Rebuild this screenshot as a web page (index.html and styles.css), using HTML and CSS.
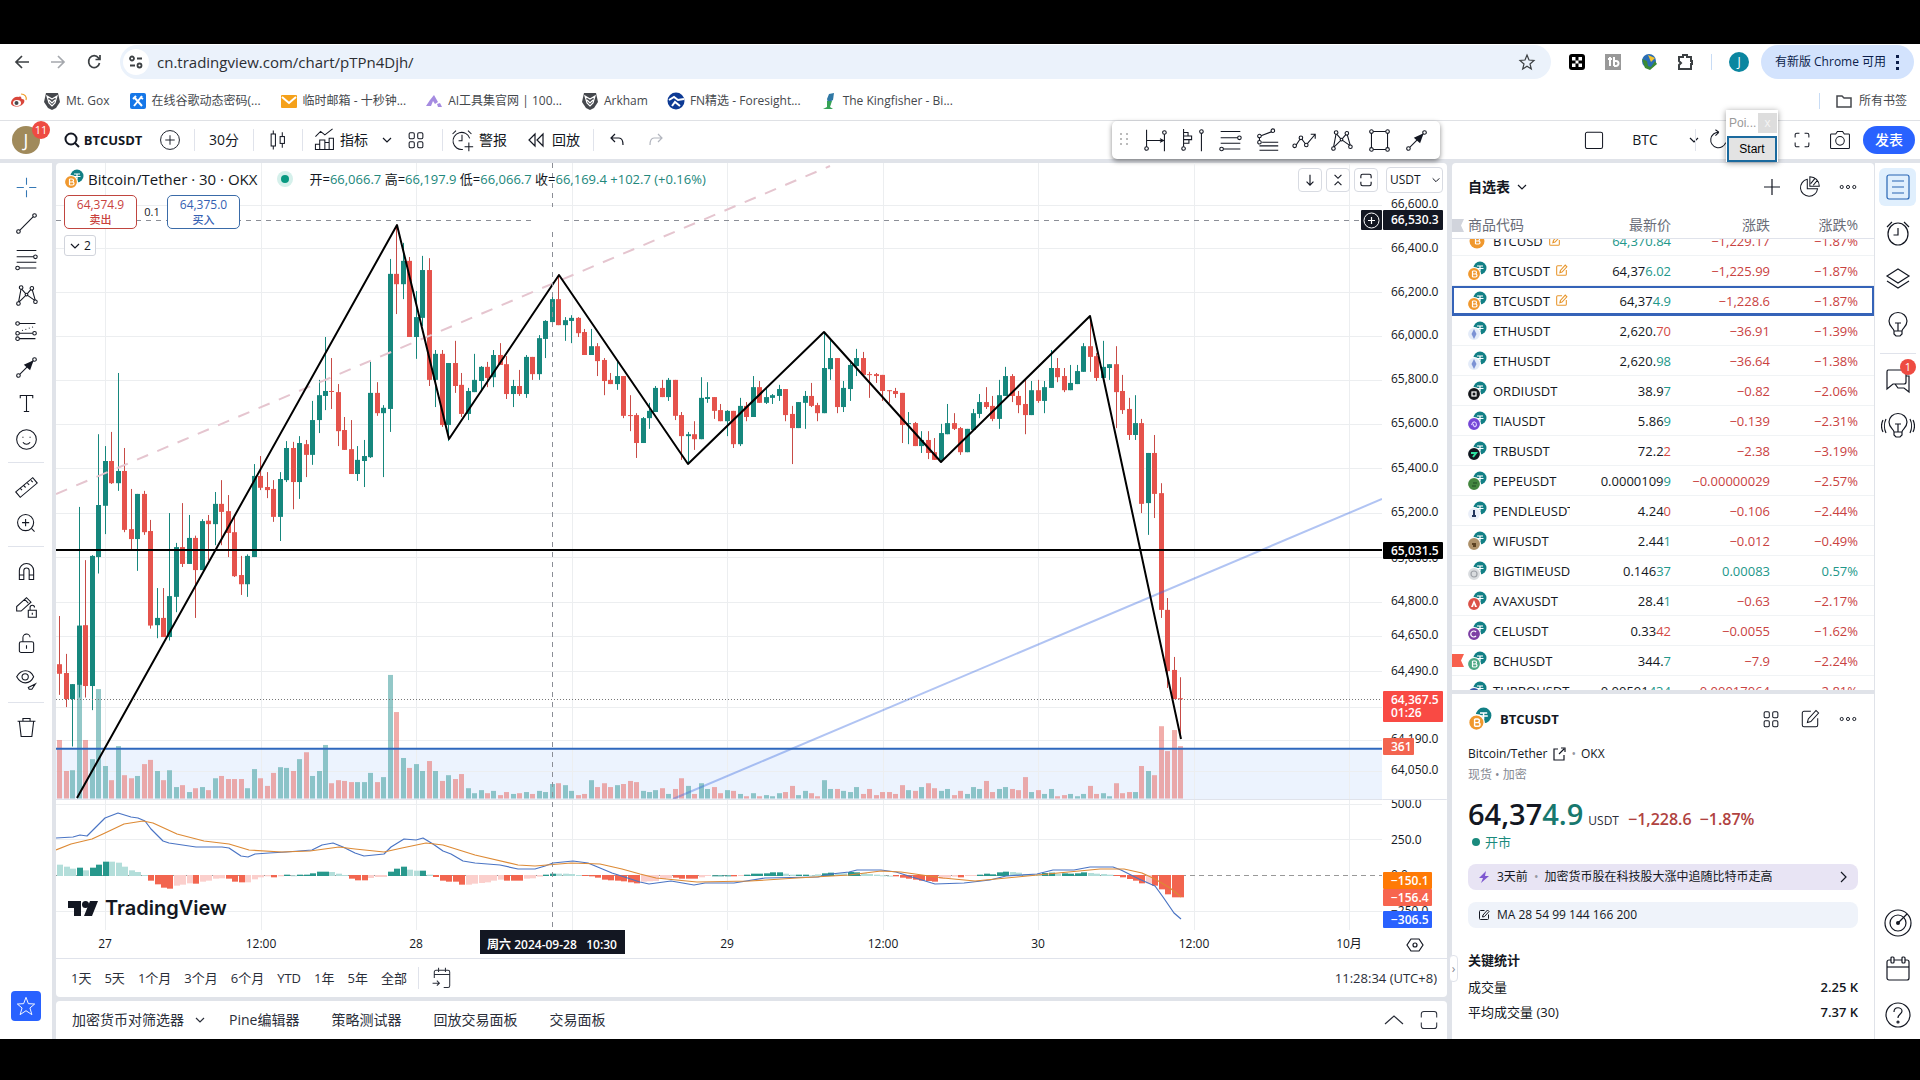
FILE: index.html
```html
<!DOCTYPE html>
<html lang="zh-CN">
<head>
<meta charset="utf-8">
<title>BTCUSDT — TradingView</title>
<link rel="stylesheet" href="styles.css">
</head>
<body>
<svg class="sprite" aria-hidden="true">
  <defs>
    <symbol id="chev" viewBox="0 0 12 12"><path d="M2 4l4 4 4-4"/></symbol>
    <symbol id="grid" viewBox="0 0 28 28"><rect x="6" y="5.500" width="6" height="7" rx="1.500"/><rect x="16" y="5.500" width="6" height="7" rx="1.500"/><rect x="6" y="16" width="6" height="7" rx="1.500"/><rect x="16" y="16" width="6" height="7" rx="1.500"/></symbol>
    <symbol id="alarm" viewBox="0 0 28 28"><ellipse cx="14" cy="15" rx="10" ry="11"/><path d="M14 9v7H9.500M3 8l5-5M25 8l-5-5"/></symbol>
    <symbol id="bulb" viewBox="0 0 28 28"><path d="M10 20c0-3-5-4-5-10a9 8.500 0 0 1 18 0c0 6-5 7-5 10zM10 20v3l2 2h4l2-2v-3M14 12v8M11 12h6"/></symbol>
    <symbol id="expand" viewBox="0 0 28 28"><path d="M6 11V8a2 2 0 0 1 2-2h3M17 6h3a2 2 0 0 1 2 2v3M22 17v3a2 2 0 0 1-2 2h-3M11 22H8a2 2 0 0 1-2-2v-3"/></symbol>
    <symbol id="frame" viewBox="0 0 28 28"><path d="M5 11V7a3 3 0 0 1 3-3h12a3 3 0 0 1 3 3v4M23 17v4a3 3 0 0 1-3 3H8a3 3 0 0 1-3-3v-4"/></symbol>
    <symbol id="dots" viewBox="0 0 28 28"><circle cx="6" cy="14" r="2"/><circle cx="14" cy="14" r="2"/><circle cx="22" cy="14" r="2"/></symbol>
    <symbol id="edit" viewBox="0 0 28 28"><path d="M15 5H7a2 2 0 0 0-2 2v14a2 2 0 0 0 2 2h14a2 2 0 0 0 2-2v-8M11 18l1-4L21 4l3 3-9 10z"/></symbol>
    <symbol id="fibo" viewBox="0 0 28 28"><path d="M3 4h22M3 11h19M3 17h22M6 23.500h19"/><circle cx="24" cy="11" r="2"/><circle cx="4" cy="23.500" r="2"/></symbol>
    <symbol id="pattern" viewBox="0 0 28 28"><path d="M5 22L8 6l6 7 6-7 4 14M5 22l9-9 10 7"/><g class="node"><circle cx="5" cy="23" r="2"/><circle cx="8" cy="5" r="2"/><circle cx="14" cy="13" r="1.500"/><circle cx="20" cy="6" r="2"/><circle cx="24" cy="21" r="2"/></g></symbol>
    <symbol id="arrow" viewBox="0 0 28 28"><path d="M5 23L22 6"/><path class="solid" d="M22 6l-4 11-7-6z"/><g class="node"><circle cx="5" cy="23" r="2"/><circle cx="23" cy="5" r="2"/></g></symbol>
    <symbol id="arkham" viewBox="0 0 18 18"><path class="solid" d="M3 1h12l2 9-4 6-4 2-4-2-4-6z"/><path stroke="#fff" d="M4 4l5 3 5-3-2 7-3 3-3-3zM6 8l3 3 3-3"/></symbol>
    <symbol id="coins" viewBox="0 0 20 20"><circle cx="13" cy="7" r="6.500" fill="#117f85" stroke="none"/><path d="M10 5h6M13 5v5M9.500 7.500h7" stroke="#fff"/><circle class="coin" cx="7" cy="13" r="6.500" stroke="#fff"/></symbol>
    <symbol id="btc" viewBox="0 0 20 20"><path stroke="#fff" d="M5.500 10v6M5.500 10h2.500a1.500 1.500 0 0 1 0 3H5.500h3a1.500 1.500 0 0 1 0 3h-3"/></symbol>
  </defs>
</svg>

<div class="browser">
  <header class="chrome">
    <div class="address-row">
      <button class="nav" aria-label="后退"><svg viewBox="0 0 20 20"><path d="M17 10H4M10 4l-6 6 6 6"/></svg></button>
      <button class="nav faded" aria-label="前进"><svg viewBox="0 0 20 20"><path d="M3 10h13M10 4l6 6-6 6"/></svg></button>
      <button class="nav" aria-label="重新加载"><svg viewBox="0 0 20 20"><path d="M15.500 11a5.500 6 0 1 1-1-5l1 1M16 3v4.500h-4.500"/></svg></button>
      <div class="omnibox">
        <span class="site"><svg viewBox="0 0 16 16"><circle cx="4" cy="4.500" r="2"/><path d="M9 4.500h5M2 11.500h5"/><circle cx="11.500" cy="11.500" r="2"/></svg></span>
        <input class="url" aria-label="地址" value="cn.tradingview.com/chart/pTPn4Djh/">
        <svg class="i18" viewBox="0 0 18 18"><path d="M9 2l2 5 5 .5-4 3.500 1.300 5L9 13.300 4.700 16 6 11 2 7.500 7 7z"/></svg>
      </div>
      <div class="extensions">
        <svg class="i18" viewBox="0 0 18 18"><rect x="1" y="1" width="16" height="16" rx="3" fill="#000" stroke="none"/><path fill="#fff" stroke="none" d="M4 4h3.500v3.500H4zM10.500 4H14v3.500h-3.500zM4 10.500h3.500V14H4zM10.500 10.500H14V14h-3.500zM7.500 7.500h3v3h-3z"/></svg>
        <svg class="i18" viewBox="0 0 18 18"><rect x="1" y="1" width="16" height="16" fill="#999" stroke="none"/><path stroke="#fff" stroke-width="2" d="M4 6h4M6 4v9M10 4v9M10 8h2a2 2 0 0 1 0 5h-2"/></svg>
        <svg class="i18" viewBox="0 0 18 18"><circle cx="9" cy="8" r="7" fill="#2a6db5" stroke="none"/><path fill="#f4c430" stroke="none" d="M8 2l7 3-4 4z"/><path fill="#3a8a35" stroke="none" d="M2 6l5 2 1 5 3 1 4-6 2 3-7 6-5-2z"/></svg>
        <svg class="i18" viewBox="0 0 18 18"><path stroke-width="2" d="M3 4h4V2h4v2h4v4h1v3h-1v5H3v-4l2-2-2-2z"/></svg>
        <i class="vline blue"></i>
        <span class="profile">J</span>
        <button class="update">有新版 Chrome 可用 <svg viewBox="0 0 4 18"><path class="solid" d="M0 2h3v3H0zM0 8h3v3H0zM0 14h3v3H0z"/></svg></button>
      </div>
    </div>
    <nav class="bookmarks" aria-label="书签">
      <a href="#" aria-label="微博"><svg class="i18" viewBox="0 0 18 18"><path fill="#d9463b" stroke="none" d="M8 5c4-2 3 2 4 2 3 0 3 3 1 5-4 4-12 3-12-1 0-3 4-7 7-6z"/><ellipse cx="7" cy="11" rx="4" ry="3" fill="#fff" stroke="none"/><circle class="solid" cx="6.500" cy="11" r="2"/><path stroke="#f0a030" d="M11 2c4 0 6 3 5 6"/></svg></a>
      <a href="#"><svg class="i18"><use href="#arkham"/></svg>Mt. Gox</a>
      <a href="#"><svg class="i18" viewBox="0 0 18 18"><rect x="1" y="1" width="16" height="16" rx="2" fill="#1677e8" stroke="none"/><path stroke="#fff" stroke-width="2" d="M5 5l8 9M13 4l-8 10M4 7l3-3M11 5l3 2"/></svg>在线谷歌动态密码(...</a>
      <a href="#"><svg class="i18" viewBox="0 0 18 18"><rect x="1" y="3" width="16" height="13" rx="1" fill="#f5a11a" stroke="none"/><path stroke="#fff" stroke-width="2" d="M2 5l7 6 7-6"/></svg>临时邮箱 - 十秒钟...</a>
      <a href="#"><svg class="i18" viewBox="0 0 18 18"><path fill="#a58be0" stroke="none" d="M9 3l4 7-3 2-2-3-2 5H1l4-6zM12 12l3-1 2 4h-4z"/></svg>AI工具集官网 | 100...</a>
      <a href="#"><svg class="i18"><use href="#arkham"/></svg>Arkham</a>
      <a href="#"><svg class="i18" viewBox="0 0 18 18"><circle cx="9" cy="9" r="8.500" fill="#0d3a94" stroke="none"/><path stroke="#fff" stroke-width="2" d="M2 8l5-3 4 3 6-1M5 14l3-4 5 4"/></svg>FN精选 - Foresight...</a>
      <a href="#"><svg class="i18" viewBox="0 0 18 18"><path fill="#2f78a5" stroke="none" d="M9 2l5-1-1 7-5 3-1-4z"/><path fill="#36a256" stroke="none" d="M7 9l5 0-2 6 3 2H3l4-2z"/></svg>The Kingfisher - Bi...</a>
      <span class="spacer"></span>
      <i class="vline blue"></i>
      <a href="#"><svg class="i18" viewBox="0 0 18 18"><path stroke-width="1.500" d="M2 4h5l2 2h7v9H2z"/></svg>所有书签</a>
    </nav>
  </header>

  <div class="topbar">
    <div class="account">J<b>11</b></div>
    <button class="symbol"><svg class="i16" viewBox="0 0 16 16"><circle cx="7" cy="7" r="5.500" stroke-width="2"/><path stroke-width="2" d="M11 11l4 4"/></svg>BTCUSDT</button>
    <button aria-label="对比"><svg class="i22" viewBox="0 0 28 28"><circle cx="14" cy="14" r="12"/><path d="M14 8v12M8 14h12"/></svg></button>
    <i class="vline"></i>
    <button class="interval">30分</button>
    <i class="vline"></i>
    <button class="bars" aria-label="K线"><svg class="i24" viewBox="0 0 28 28"><rect x="6" y="7" width="5" height="14"/><path d="M8.500 3v4M8.500 21v4M19 5v5M19 18v5"/><rect x="16.500" y="10" width="5" height="8"/></svg></button>
    <i class="vline"></i>
    <button class="indicators"><svg class="i24" viewBox="0 0 28 28"><path d="M4 10l6-6 5 4 9-7M4 25v-6h5v6zM9 25V14h6v11M15 25v-8h5v8M20 17v-5h5v13H4"/></svg>指标</button>
    <button aria-label="指标菜单"><svg class="i10"><use href="#chev"/></svg></button>
    <button class="layouts" aria-label="模板"><svg class="i24"><use href="#grid"/></svg></button>
    <i class="vline"></i>
    <button class="alert"><svg class="i24" viewBox="0 0 28 28"><path d="M23 12a10 10 0 1 0-8 13M14 8v7h-4M3 7l4-4M25 7l-4-4M22 17v10M17 22h10"/></svg>警报</button>
    <button class="replay"><svg class="i18" viewBox="0 0 18 18"><path d="M8 3v12L2 9zM16 3v12l-6-6z"/></svg>回放</button>
    <i class="vline"></i>
    <button class="undo" aria-label="撤销"><svg class="i18" viewBox="0 0 18 18"><path d="M7 3L3 7l4 4M3 7h8c3 0 4 3 4 7"/></svg></button>
    <button class="undo faded" aria-label="重做"><svg class="i18" viewBox="0 0 18 18"><path d="M11 3l4 4-4 4M15 7H7c-3 0-4 3-4 7"/></svg></button>
    <span class="spacer"></span>
    <div class="favorites">
      <svg class="grip" viewBox="0 0 8 14"><path fill="#bbb" stroke="none" d="M0 0h2v2H0zM6 0h2v2H6zM0 5h2v2H0zM6 5h2v2H6zM0 10h2v2H0zM6 10h2v2H6z"/></svg>
      <button aria-label="日期范围"><svg viewBox="0 0 28 28"><path d="M4 2v20M24 6v20M4 14h18M19 12l4 2-4 2"/><g class="node"><circle cx="4" cy="23" r="2"/><circle cx="24" cy="5" r="2"/></g></svg></button>
      <button aria-label="成交量分布"><svg viewBox="0 0 28 28"><path d="M4 1v20M4 5h5v4H4M4 9h9v4H4M4 13h6v4H4M24 6v20"/><g class="node"><circle cx="4" cy="23" r="2"/><circle cx="24" cy="4" r="2"/></g></svg></button>
      <button aria-label="斐波那契回撤"><svg><use href="#fibo"/></svg></button>
      <button aria-label="趋势斐波那契"><svg viewBox="0 0 28 28"><path d="M6 9l13-5M5 10v6M8 16h18M5 20h21M5 25h21"/><g class="node"><circle cx="5" cy="9" r="2"/><circle cx="5" cy="16" r="2"/><circle cx="20" cy="3" r="2"/></g></svg></button>
      <button aria-label="路径"><svg viewBox="0 0 28 28"><path d="M4 20l6-9 6 8 10-12M21 7h5v5"/><g class="node"><circle cx="3" cy="20" r="2"/><circle cx="10" cy="11" r="2"/><circle cx="16" cy="19" r="2"/></g></svg></button>
      <button aria-label="XABCD"><svg><use href="#pattern"/></svg></button>
      <button aria-label="矩形"><svg viewBox="0 0 28 28"><path d="M5 4h18v20H5z"/><g class="node"><circle cx="5" cy="4" r="2"/><circle cx="23" cy="4" r="2"/><circle cx="5" cy="24" r="2"/><circle cx="23" cy="24" r="2"/></g></svg></button>
      <button aria-label="箭头"><svg><use href="#arrow"/></svg></button>
    </div>
    <button class="layout-box" aria-label="布局"><svg class="i24" viewBox="0 0 28 28"><rect x="4" y="5" width="20" height="19" rx="2"/></svg></button>
    <button class="layout-name">BTC <svg class="i10"><use href="#chev"/></svg></button>
    <i class="vline"></i>
    <button class="quick" aria-label="快速搜索"><svg class="i24" viewBox="0 0 28 28"><path d="M15 5a9 9 0 1 0 8 12M15 5l-4-3M15 5l-4 4"/></svg></button>
    <button class="tool-r" aria-label="全屏"><svg class="i24"><use href="#expand"/></svg></button>
    <button class="tool-r" aria-label="快照"><svg class="i24" viewBox="0 0 28 28"><path d="M4 7h5l2-3h6l2 3h5a1 1 0 0 1 1 1v15a1 1 0 0 1-1 1H4a1 1 0 0 1-1-1V8a1 1 0 0 1 1-1z"/><circle cx="14" cy="15" r="5"/></svg></button>
    <button class="publish">发表</button>
    <div class="mini-window">
      <div class="mini-title">Poi...<button aria-label="关闭">x</button></div>
      <button class="start">Start</button>
    </div>
  </div>

  <div class="workspace">
    <aside class="drawing" aria-label="绘图工具">
      <button aria-label="十字"><svg viewBox="0 0 28 28" class="cross"><path d="M14 3v8M14 17v8M3 14h8M17 14h8"/></svg></button>
      <button aria-label="趋势线"><svg viewBox="0 0 28 28"><path d="M5 23L23 5"/><g class="node"><circle cx="5" cy="23" r="2"/><circle cx="23" cy="5" r="2"/></g></svg></button>
      <button aria-label="斐波那契"><svg><use href="#fibo"/></svg></button>
      <button aria-label="形态"><svg><use href="#pattern"/></svg></button>
      <button aria-label="预测"><svg viewBox="0 0 28 28"><path d="M5 5h19M5 16h17M5 22h19"/><path stroke-dasharray="1 3" d="M9 13l15-5"/><g class="node"><circle cx="4" cy="5" r="2"/><circle cx="4" cy="16" r="2"/><circle cx="4" cy="22" r="2"/><circle cx="23" cy="16" r="2"/></g></svg></button>
      <button aria-label="箭头"><svg><use href="#arrow"/></svg></button>
      <button aria-label="文字"><svg viewBox="0 0 28 28"><path d="M7 8V5h14v3M14 5v18M11 23h6"/></svg></button>
      <button aria-label="图标"><svg viewBox="0 0 28 28"><circle cx="14" cy="14" r="11"/><path d="M10 11v1M18 11v1M10 17c2 3 6 3 8 0"/></svg></button>
      <hr>
      <button aria-label="测量"><svg viewBox="0 0 28 28"><path d="M2 19L21 3l5 6L7 25zM7 15l2 2M11 12l2 2M15 9l2 2M19 6l2 2"/></svg></button>
      <button aria-label="放大"><svg viewBox="0 0 28 28"><circle cx="13" cy="13" r="9"/><path d="M19.500 19.500L23 23M13 9v8M9 13h8"/></svg></button>
      <hr>
      <button aria-label="磁铁"><svg viewBox="0 0 28 28"><path d="M6 23V13a8 8 0 0 1 16 0v10h-5V13a3 3 0 0 0-6 0v10zM6 18h5M17 18h5"/></svg></button>
      <button aria-label="保持绘图"><svg viewBox="0 0 28 28"><path d="M3 18v-5L14 3l5 5L8 18zM12 5l4 4M16 17h9v8h-9zM18 17v-3a2.500 2.500 0 0 1 5 0M20.500 20v2"/></svg></button>
      <button aria-label="锁定"><svg viewBox="0 0 28 28"><rect x="6" y="12" width="16" height="12" rx="2"/><path d="M10 12V8a4 4 0 0 1 8-1M14 16v4"/></svg></button>
      <button aria-label="隐藏"><svg viewBox="0 0 28 28"><path d="M3 11c5-9 15-9 19 0-4 9-14 9-19 0zM16 23l8-4-4 6-3 0z"/><circle cx="12.500" cy="11" r="3.500"/></svg></button>
      <hr>
      <button aria-label="删除"><svg viewBox="0 0 28 28"><path d="M4 7h20M6 7l2 17h12l2-17M10 7V4h8v3"/></svg></button>
      <span class="spacer"></span>
      <button class="fav" aria-label="收藏工具栏"><svg viewBox="0 0 28 28"><path d="M14 3l3 8 8 .5-6 5 2.500 8.500L14 20l-7.500 5L9 16.500l-6-5 8-.5z"/></svg></button>
    </aside>

    <main class="center">
      <section class="chart">
        <div class="panes">
          <svg id="plot" class="plot" role="img" aria-label="BTCUSDT 30分 K线图"></svg>
          <svg id="axis" class="axis" aria-label="价格坐标"></svg>
          <div class="legend">
            <div class="legend-title">
              <svg class="i20 btc"><use href="#coins"/><use href="#btc"/></svg>
              <h1>Bitcoin/Tether · 30 · OKX</h1><i class="live"></i>
              <p>开=<b>66,066.7</b> 高=<b>66,197.9</b> 低=<b>66,066.7</b> 收=<b>66,169.4</b> <b>+102.7 (+0.16%)</b></p>
            </div>
            <div class="trade">
              <button class="sell">64,374.9<span>卖出</span></button><small>0.1</small><button class="buy">64,375.0<span>买入</span></button>
            </div>
            <button class="collapse"><svg class="i10"><use href="#chev"/></svg>2</button>
          </div>
          <a class="brand" href="#"><svg viewBox="0 0 30 15"><path class="solid" d="M0 0h13v15H6V7H0zM22 0h8l-6 15h-8z"/><circle class="solid" cx="17.500" cy="3.500" r="3.500"/></svg>TradingView</a>
          <div class="pane-tools">
            <button aria-label="下移"><svg viewBox="0 0 28 28"><path d="M14 5v18M8 17l6 6 6-6"/></svg></button>
            <button aria-label="折叠"><svg viewBox="0 0 28 28"><path d="M8 5l6 6 6-6M8 23l6-6 6 6"/></svg></button>
            <button aria-label="最大化"><svg><use href="#frame"/></svg></button>
            <label class="currency"><select aria-label="货币"><option>USDT</option></select><svg class="i10"><use href="#chev"/></svg></label>
          </div>
        </div>
        <svg id="time" class="time" aria-label="时间坐标"></svg>
        <div class="ranges">
          <button>1天</button><button>5天</button><button>1个月</button><button>3个月</button><button>6个月</button><button>YTD</button><button>1年</button><button>5年</button><button>全部</button>
          <i class="vline"></i>
          <button class="goto" aria-label="前往日期"><svg class="i24" viewBox="0 0 28 28"><path d="M5 14V7a2 2 0 0 1 2-2h14a2 2 0 0 1 2 2v16a2 2 0 0 1-2 2h-5M5 10h18M10 2v5M18 2v5M3 20h8M8 17l3 3-3 3"/></svg></button>
          <span class="spacer"></span>
          <button>11:28:34 (UTC+8)</button>
        </div>
      </section>
      <section class="tabs">
        <button>加密货币对筛选器 <svg class="i10"><use href="#chev"/></svg></button><button>Pine编辑器</button><button>策略测试器</button><button>回放交易面板</button><button>交易面板</button>
        <span class="spacer"></span>
        <button aria-label="展开"><svg class="i20" viewBox="0 0 20 20"><path d="M1 14l9-8 9 8"/></svg></button>
        <button aria-label="最大化"><svg class="i24"><use href="#frame"/></svg></button>
      </section>
    </main>

    <section class="side">
      <button class="handle" aria-label="收起">›</button>
      <div class="watch">
        <header><h2>自选表 <svg class="i10"><use href="#chev"/></svg></h2>
          <button aria-label="添加"><svg class="i18" viewBox="0 0 18 18"><path d="M9 1v16M1 9h16"/></svg></button>
          <button aria-label="高级视图"><svg class="i24" viewBox="0 0 28 28"><path d="M12 5a10 10 0 1 0 12 11H12zM15 2v11h11A11 11 0 0 0 15 2zM16 10l5-6M19 12l5-6"/></svg></button>
          <button aria-label="更多"><svg class="i22"><use href="#dots"/></svg></button>
        </header>
        <div class="list" id="list">
          <table>
            <thead><tr><th><i class="flag"></i>商品代码</th><th>最新价</th><th>涨跌</th><th>涨跌%</th></tr></thead>
            <tbody id="rows"></tbody>
          </table>
        </div>
      </div>
      <div class="detail">
        <header><svg class="i24 btc"><use href="#coins"/><use href="#btc"/></svg><h2>BTCUSDT</h2>
          <button aria-label="布局"><svg class="i24"><use href="#grid"/></svg></button>
          <button aria-label="备注"><svg class="i24"><use href="#edit"/></svg></button>
          <button aria-label="更多"><svg class="i22"><use href="#dots"/></svg></button>
        </header>
        <p class="name">Bitcoin/Tether <svg class="i14" viewBox="0 0 14 14"><path d="M6 2H2v11h10V8M7 7l5-5M9 1h4v4"/></svg> <em>•</em> OKX</p>
        <p class="kind">现货 • 加密</p>
        <p class="price"><strong>64,37<b>4.9</b></strong><small>USDT</small><span>−1,228.6</span><span>−1.87%</span></p>
        <p class="market">开市</p>
        <button class="news"><svg class="i14" viewBox="0 0 14 14"><path fill="#7e57d0" stroke="none" d="M9 1L2 8h4l-2 5 8-7H8z"/></svg>3天前 <em>•</em> 加密货币股在科技股大涨中追随比特币走高<svg class="i10 go" viewBox="0 0 12 12"><path d="M4 1l5 5-5 5"/></svg></button>
        <button class="note"><svg class="i14"><use href="#edit"/></svg>MA 28 54 99 144 166 200</button>
        <h3>关键统计</h3>
        <dl><dt>成交量</dt><dd>2.25 K</dd><dt>平均成交量 (30)</dt><dd>7.37 K</dd></dl>
      </div>
    </section>

    <aside class="widgets" aria-label="小工具">
      <button class="active" aria-label="自选表"><svg viewBox="0 0 28 28"><rect x="3" y="2" width="22" height="24" rx="2"/><path d="M8 8h12M8 14h12M8 20h12"/></svg></button>
      <button aria-label="警报"><svg><use href="#alarm"/></svg></button>
      <button aria-label="图层"><svg viewBox="0 0 28 28"><path d="M14 4l11 7-11 7-11-7zM3 16l11 7 11-7"/></svg></button>
      <button aria-label="观点"><svg><use href="#bulb"/></svg></button>
      <hr>
      <button class="chat" aria-label="聊天"><svg viewBox="0 0 28 28"><path d="M4 4h16a2 2 0 0 1 2 2v10a2 2 0 0 1-2 2H9l-6 5V6a2 2 0 0 1 1-2zM22 10h3v16l-5-4h-6l-3-4"/></svg><b>1</b></button>
      <button aria-label="直播"><svg><use href="#bulb"/></svg><svg class="waves" viewBox="0 0 34 28"><path d="M5 7c-2 4-2 10 0 14M2 8c-2 4-2 8 0 12M29 7c2 4 2 10 0 14M32 8c2 4 2 8 0 12"/></svg></button>
      <span class="spacer"></span>
      <button aria-label="目标"><svg viewBox="0 0 28 28"><circle cx="14" cy="14" r="13"/><circle cx="14" cy="14" r="8"/><circle class="solid" cx="14" cy="14" r="2"/><path d="M14 14l9-9"/></svg></button>
      <button aria-label="日历"><svg viewBox="0 0 28 28"><rect x="3" y="5" width="22" height="20" rx="2"/><path d="M3 12h22"/><g class="node"><rect x="7" y="2" width="3" height="6" rx="1"/><rect x="18" y="2" width="3" height="6" rx="1"/></g></svg></button>
      <button aria-label="帮助"><svg viewBox="0 0 28 28"><circle cx="14" cy="14" r="12"/><path d="M10 11c0-6 8-5 8-1 0 3-4 3-4 7"/><circle cx="14" cy="21" r="1"/></svg></button>
    </aside>
  </div>
</div>
<script src="script.js"></script>
</body>
</html>
```
FILE: styles.css
```css
* { box-sizing: border-box; margin: 0; }
body {
  height: 100vh; padding: 44px 0 41px; background: #000; color: #131722;
  font-family: "Open Sans", "Noto Sans CJK SC", sans-serif; font-size: 14px; line-height: 20px;
}
button, input, select { font: inherit; color: inherit; border: 0; background: none; padding: 0; }
button { display: flex; align-items: center; justify-content: center; white-space: nowrap; }
a { color: inherit; text-decoration: none; }
em { font-style: normal; color: #9598a1; }
svg { fill: none; stroke: currentColor; stroke-width: 1.2; flex: none; display: block; }
svg text { stroke: none; fill: #131722; font-size: 12px; }
.solid { fill: currentColor; stroke: none; }
.node { fill: #fff; }
.sprite { position: absolute; width: 0; height: 0; }
.spacer { flex: 1; }
.i10 { width: 12px; height: 12px; }
.i14 { width: 14px; height: 14px; }
.i16 { width: 16px; height: 16px; }
.i18 { width: 18px; height: 18px; }
.i20 { width: 20px; height: 20px; }
.i22 { width: 22px; height: 22px; }
.i24 { width: 24px; height: 24px; }
.coin { fill: var(--coin, #f0982e); }
.btc { --coin: #f0982e; }
.vline { width: 1px; height: 22px; background: #e0e3eb; flex: none; }
.vline.blue { height: 16px; background: #c8dcf5; }
.faded { color: #b2b5be; }

.browser { height: 100%; display: flex; flex-direction: column; background: #fff; }

/* Browser chrome */
.chrome { height: 77px; border-bottom: 1px solid #dfe1e5; color: #3c4043; }
.address-row { display: flex; align-items: center; height: 38px; padding: 0 6px 2px 12px; }
.nav { width: 36px; justify-content: flex-start; }
.nav svg { width: 20px; height: 20px; stroke-width: 1.7; }
.nav.faded { color: #a5a8ad; }
.omnibox { flex: 1; display: flex; align-items: center; height: 34px; padding: 0 15px 0 3px; background: #ebf2fb; border-radius: 17px; }
.site { width: 26px; height: 26px; border-radius: 13px; background: #fff; display: grid; place-items: center; }
.site svg { width: 16px; height: 16px; stroke-width: 1.8; }
.url { flex: 1; margin-left: 8px; font-size: 15px; color: #2b2e33; }
.extensions { display: flex; align-items: center; gap: 18px; padding-left: 17px; }
.extensions .vline { margin: 0 -1px; }
.profile { width: 20px; height: 20px; border-radius: 10px; background: #0b86a0; color: #fff; font-size: 12px; text-align: center; }
.update { height: 34px; width: 153px; gap: 10px; margin-left: -6px; border-radius: 17px; background: #d3e3fd; color: #0b1d4a; font-size: 12px; }
.update svg { width: 4px; height: 18px; }
.bookmarks { display: flex; align-items: center; height: 38px; padding: 0 13px 0 10px; font-size: 12px; color: #45484d; }
.bookmarks a { display: flex; align-items: center; gap: 5px; margin-right: 19px; white-space: nowrap; }
.bookmarks a:first-child { margin-right: 15px; }
.bookmarks a:last-child { margin: 0 0 0 15px; gap: 6px; }

/* Chart header */
.topbar { position: relative; display: flex; align-items: center; flex: none; height: 38px; padding: 0 5px 0 12px; }
.account { position: relative; width: 28px; height: 28px; border-radius: 14px; background: #a08a5b; color: #fff; font-size: 18px; line-height: 28px; text-align: center; }
.account b, .chat b { position: absolute; top: -5px; right: -10px; width: 18px; height: 18px; border-radius: 9px; background: #ee4b42; color: #fff; font: 11px/18px "Open Sans", sans-serif; text-align: center; }
.symbol { gap: 4px; width: 80px; margin: 0 16px 0 23px; font-weight: 700; font-size: 13px; }
.topbar > .vline { margin: 0 13px; }
.interval { width: 32px; }
.bars, .layouts { width: 22px; }
.indicators { gap: 4px; margin: 0 13px 0 -4px; }
.layouts { margin-left: 11px; margin-right: 1px; width: 24px; }
.indicators + button { width: 12px; }
.alert { gap: 5px; margin: 0 20px 0 -6px; }
.replay { gap: 7px; }
.undo { width: 20px; margin-right: 19px; }
.favorites { display: flex; align-items: center; height: 38px; width: 328px; padding: 0 5px 0 8px; margin-right: 142px; background: #fff; border-radius: 5px; box-shadow: 0 2px 5px #0007; }
.favorites .grip { width: 8px; height: 14px; margin-right: 9px; }
.favorites button { flex: 1; }
.favorites button svg { width: 25px; height: 25px; }
.layout-name { gap: 30px; width: 72px; margin-left: 24px; margin-right: -20px; }
.quick { width: 44px; margin-left: -10px; padding-right: 6px; }
.tool-r { width: 38px; margin-left: 0; }
.quick + .tool-r { margin-left: 40px; }
.publish { width: 52px; height: 28px; margin-left: 4px; border-radius: 14px; background: #2962ff; color: #fff; font-weight: 500; }
.mini-window { position: absolute; z-index: 5; top: -11px; right: 142px; width: 52px; height: 52px; padding: 0 1px; display: flex; flex-direction: column; justify-content: space-between; background: #fff; box-shadow: 0 1px 6px #0006; font-family: "Liberation Sans", sans-serif; font-size: 12px; }
.mini-title { display: flex; justify-content: space-between; padding: 3px 0 0 2px; color: #999; }
.mini-title button { width: 19px; height: 20px; background: #ddd; color: #f4f4f4; }
.start { height: 26px; border: 2px solid #1b6a9e; background: #e3e3e3; color: #000; }

/* Workspace */
.workspace { flex: 1; min-height: 0; display: flex; gap: 4px; padding-top: 4px; background: #e0e3e9; }
.drawing, .widgets { display: flex; flex-direction: column; align-items: center; background: #fff; }
.drawing { width: 52px; padding-top: 6px; }
.drawing button { width: 36px; height: 36px; }
.drawing svg { width: 25px; height: 25px; }
.drawing .cross { color: #3578b5; }
.drawing hr, .widgets hr { width: 36px; border: 0; border-top: 1px solid #e0e3eb; margin: 5px 0 6px; }
.drawing .fav { width: 30px; height: 30px; margin-bottom: 18px; border-radius: 4px; background: #2962ff; color: #fff; }
.drawing .fav svg { width: 22px; height: 22px; }
.center { flex: 1; min-width: 0; display: flex; flex-direction: column; gap: 4px; }
.chart { flex: 1; min-height: 0; display: flex; flex-direction: column; background: #fff; border-radius: 4px; }
.panes { position: relative; flex: 1; min-height: 0; display: flex; }
.plot { flex: 1; min-width: 0; height: 100%; }
.axis { width: 65px; height: 100%; overflow: visible; }
.axis .tag { fill: #fff; font-weight: 600; }
.time { width: 100%; height: 28px; overflow: visible; }
.time text { text-anchor: middle; }
.legend { position: absolute; left: 8px; top: 4px; display: flex; flex-direction: column; gap: 4px; align-items: flex-start; }
.legend-title { display: flex; align-items: center; height: 24px; white-space: nowrap; }
.legend h1 { margin: 0 20px 0 4px; font-size: 15px; font-weight: 400; }
.live { width: 8px; height: 8px; margin: 0 20px 0 4px; border-radius: 4px; background: #089981; box-shadow: 0 0 0 4px #d5f0eb; }
.legend p { font-size: 13px; }
.legend p b { font-weight: 400; color: #21877b; }
.trade { display: flex; align-items: center; }
.trade button { flex-direction: column; width: 73px; height: 34px; border: 1px solid #c0453f; border-radius: 5px; background: #fff; color: #c9423d; font-size: 12px; line-height: 15px; font-weight: 500; }
.trade .buy { border-color: #3a6ba8; color: #345fb2; }
.trade span { font-size: 11px; }
.trade small { width: 30px; text-align: center; font-size: 11px; }
.collapse { width: 32px; height: 21px; margin-top: 2px; gap: 3px; border: 1px solid #d1d4dc; border-radius: 3px; background: #fff; font-size: 12px; }
.brand { position: absolute; left: 12px; bottom: 10px; display: flex; align-items: center; gap: 7px; font: 600 20px/24px Inter, sans-serif; color: #131722; }
.brand svg { width: 30px; height: 15px; }
.pane-tools { position: absolute; top: 4px; right: 4px; display: flex; gap: 4px; align-items: center; }
.pane-tools button, .currency { width: 24px; height: 24px; border: 1px solid #d8dbe2; border-radius: 4px; background: #fff; }
.pane-tools button svg { width: 16px; height: 16px; stroke-width: 2; }
.currency { position: relative; width: 57px; height: 26px; margin-left: 4px; }
.currency select { appearance: none; width: 100%; height: 24px; padding-left: 3px; font-size: 12px; }
.currency svg { position: absolute; right: 1px; top: 7px; width: 10px; height: 10px; }
.ranges { display: flex; align-items: center; gap: 13px; height: 39px; padding: 0 10px 0 15px; border-top: 1px solid #e0e3eb; font-size: 13px; color: #2a2e39; }
.ranges .vline { margin: 0 -2px; }
.tabs { display: flex; align-items: center; gap: 32px; height: 38px; padding: 0 6px 0 16px; background: #fff; border-radius: 4px 4px 0 0; color: #2a2e39; }
.tabs button:first-child { gap: 10px; margin-right: -9px; }
.tabs button:nth-last-child(2) { margin-right: -19px; }

/* Right panel */
.side { position: relative; width: 422px; display: flex; flex-direction: column; gap: 4px; margin-left: 1px; }
.handle { position: absolute; left: -3px; bottom: 57px; z-index: 2; width: 9px; height: 27px; border: 1px solid #e0e3eb; border-radius: 4px; background: #fff; color: #868993; font-size: 12px; }
.watch { flex: 1; min-height: 0; display: flex; flex-direction: column; background: #fff; border-radius: 4px 4px 0 0; }
.watch > header { display: flex; align-items: center; height: 48px; padding: 0 15px 0 16px; gap: 16px; }
.side h2 { flex: 1; display: flex; align-items: center; gap: 6px; font-size: 14px; font-weight: 600; }
.list { flex: 1; min-height: 0; overflow-y: auto; scrollbar-width: none; }
table { width: 100%; table-layout: fixed; border-collapse: separate; border-spacing: 0; font-size: 13px; }
th { position: sticky; z-index: 1; top: 0; height: 28px; padding: 0; background: #fff; border-bottom: 1px solid #e0e3eb; font-size: 14px; font-weight: 400; color: #6a6d78; text-align: right; }
th:nth-child(1) { width: 118px; padding-left: 16px; text-align: left; }
th:nth-child(2) { width: 101px; }
th:nth-child(3) { width: 99px; }
th:nth-child(4) { padding-right: 16px; }
td { height: 30px; padding: 0; border-bottom: 1px solid #f0f3f5; text-align: right; color: #c9423f; }
td:first-child { position: relative; color: #131722; }
td:nth-child(2) { color: #131722; }
td:last-child { padding-right: 16px; }
td .sym { display: flex; align-items: center; gap: 6px; margin-left: 15px; overflow: hidden; }
td .edit { width: 15px; height: 15px; color: #e8962c; stroke-width: 2; margin-left: -2px; }
tr.selected td { box-shadow: inset 0 2px #3563b8, inset 0 -2px #3563b8; border-bottom-color: #3563b8; }
tr.selected td:first-child { box-shadow: inset 2px 2px #3563b8, inset 0 -2px #3563b8; }
tr.selected td:last-child { box-shadow: inset -2px 2px #3563b8, inset 0 -2px #3563b8; }
.up { color: #21978a; }
.down { color: #d44a45; }
td.up { color: #21978a; }
.flag { position: absolute; left: 0; top: 8px; width: 12px; height: 13px; background: #d1d4dc; clip-path: polygon(0 0, 100% 0, 75% 50%, 100% 100%, 0 100%); }
td .flag { background: #f7604d; }
.detail { padding: 9px 16px 14px; background: #fff; font-size: 12px; }
.detail > header { display: flex; align-items: center; gap: 15px; height: 32px; margin-bottom: 9px; }
.detail > header h2 { margin-left: -7px; font-size: 13px; font-weight: 700; }
.detail > header button:last-child { margin-right: -1px; }
.name { display: flex; align-items: center; gap: 5px; }
.kind { height: 30px; color: #868993; padding-top: 1px; }
.price { display: flex; align-items: baseline; height: 38px; color: #b04240; font-size: 16px; font-weight: 600; line-height: 40px; }
.price strong, .price b { font-weight: 600; }
.price strong { color: #131722; font-size: 29px; }
.price strong b { color: #18786e; }
.price small { margin: 0 9px 0 5px; color: #2a2e39; font-size: 12px; font-weight: 400; }
.price span { margin-right: 8px; }
.market { display: flex; align-items: center; gap: 5px; padding-left: 4px; height: 20px; margin-bottom: 12px; color: #1a8a7d; font-size: 13px; }
.market::before { content: ""; width: 8px; height: 8px; border-radius: 4px; background: currentColor; }
.news, .note { width: 100%; height: 26px; padding: 0 9px; gap: 6px; justify-content: flex-start; border-radius: 8px; background: #e8e4f4; margin-bottom: 12px; }
.note { background: #eff3fa; margin-bottom: 22px; }
.note svg { stroke-width: 2; }
.go { margin-left: auto; }
.detail h3 { font-size: 13px; font-weight: 600; margin-bottom: 5px; }
dl { display: grid; grid-template-columns: 1fr auto; font-size: 13px; line-height: 25px; }
dd { font-weight: 600; }
.widgets { width: 45px; margin-left: -3px; padding-top: 1px; }
.widgets button { position: relative; width: 37px; height: 46px; flex: none; }
.widgets svg { width: 28px; height: 28px; }
.widgets hr { margin: 5px 0 3px; }
.widgets .active { height: 38px; margin: 4px 0; border-radius: 6px; background: #e0effd; color: #2664b4; }
.widgets .waves { position: absolute; width: 34px; height: 28px; }
.widgets button:last-child { margin-bottom: 1px; }
.chat b { top: 2px; right: 0; width: 16px; height: 16px; line-height: 16px; }
```
FILE: script.js
```js
const NS = "http://www.w3.org/2000/svg";
const add = (parent, tag, attrs, text) => {
  const el = document.createElementNS(NS, tag);
  for (const k in attrs) el.setAttribute(k, attrs[k]);
  if (text !== undefined) el.textContent = text;
  parent.appendChild(el);
  return el;
};
const barX = n => 60.3 + n * 6.48;
const barY = v => 200 + v / 2.613;

// colour, body top, body bottom, wick top, wick bottom, volume top
const candles = `r1213 1238 1087 1293 1411,r1236 1304 1186 1325 1492,g1265 1304 1265 1428 1490,g1112 1267 802 1300 1267,r1111 1270 941 1300 1411,g930 1270 928 1333 1461,g797 933 612 976 1278,g682 799 643 873 1479,r682 740 606 742 1516,g708 740 452 760 1427,r708 862 648 868 1503,r860 886 755 912 1511,g768 886 768 969 1505,r768 868 760 875 1474,r865 1112 836 1120 1463,g1092 1111 1014 1145 1492,r1092 1142 1014 1142 1516,g1035 1142 818 1151 1490,g907 1037 896 1077 1534,r907 951 792 959 1529,g883 951 823 951 1547,r883 967 877 1092 1537,g839 967 834 967 1534,r838 847 823 941 1542,g794 847 763 902 1511,r794 815 732 902 1505,r813 870 771 933 1513,r868 983 823 985 1513,r980 1004 930 1032 1513,g930 1004 926 1037 1537,g721 933 690 933 1487,r721 752 669 758 1511,r750 758 711 779 1531,r755 828 732 841 1497,g729 828 711 891 1482,g648 732 630 737 1484,r648 737 632 808 1492,g635 737 617 781 1461,r638 666 627 724 1443,g575 666 525 692 1505,g510 575 470 609 1492,g499 512 358 549 1424,r499 501 413 546 1524,r502 604 481 643 1516,r601 653 567 653 1518,r651 716 575 716 1521,g679 716 643 734 1521,g669 682 627 750 1521,g504 672 423 674 1497,r504 557 476 564 1521,g543 557 536 724 1508,g193 546 154 606 1241,r193 220 65 298 1338,g159 220 112 259 1458,r159 358 149 358 1484,g306 358 238 415 1474,g183 308 146 329 1492,r183 470 152 486 1466,g402 470 392 541 1492,r402 588 392 593 1518,g426 588 426 630 1503,r426 486 368 504 1513,r483 559 452 567 1500,g499 559 491 575 1537,g470 502 402 502 1550,g436 473 434 502 1542,r436 465 423 489 1550,g405 463 392 489 1544,r405 431 374 431 1555,r429 507 408 520 1547,g486 507 470 541 1552,r486 507 444 512 1550,g410 507 405 517 1547,r410 455 410 470 1552,g361 455 353 470 1544,g316 363 314 413 1547,g259 319 245 319 1526,r259 327 195 327 1524,g314 327 306 368 1529,g308 316 301 374 1544,r308 348 306 358 1555,r345 405 337 405 1552,g382 405 337 405 1516,r382 421 374 460 1534,r418 473 413 510 1524,r470 481 452 481 1534,g460 481 423 496 1529,r460 564 460 570 1526,r562 564 510 604 1518,r562 635 557 674 1521,g570 635 567 635 1544,g551 570 530 598 1547,g491 554 486 554 1542,r491 515 470 515 1537,g470 515 465 525 1552,r470 564 470 575 1539,r562 617 554 679 1511,g612 617 606 690 1531,r612 625 578 653 1552,g517 625 463 625 1524,g515 520 476 530 1539,r515 551 515 572 1534,r549 578 533 578 1550,g551 578 549 617 1542,r551 638 551 648 1544,g538 638 517 643 1552,r538 567 528 578 1558,g489 567 460 567 1550,r489 530 473 530 1558,g515 530 491 533 1555,g510 517 507 533 1558,g494 512 483 525 1550,r494 562 494 578 1547,r559 596 538 690 1531,g528 596 528 596 1555,g512 530 499 598 1544,r512 538 478 541 1550,r536 557 530 578 1558,g439 557 345 557 1516,g413 442 361 470 1539,r413 541 413 557 1539,g491 541 473 554 1544,g431 494 426 525 1547,g413 434 389 460 1534,r413 457 397 460 1552,r455 457 449 517 1539,r455 460 452 478 1555,r457 499 457 525 1547,r497 499 497 530 1547,r499 507 491 517 1552,r504 588 504 635 1529,g583 585 554 638 1542,r583 643 580 643 1544,g627 643 604 661 1534,r627 661 604 677 1524,r659 679 622 679 1537,g609 679 585 685 1544,g583 612 533 612 1539,r583 598 557 601 1555,r596 659 593 666 1544,g598 659 598 659 1552,g557 601 546 601 1534,g528 559 507 570 1539,r528 541 489 546 1518,r538 572 512 578 1547,g510 572 470 598 1539,g460 512 436 512 1534,r460 512 455 528 1539,r512 536 499 557 1542,r533 562 470 612 1508,g497 562 473 562 1547,r497 525 470 530 1542,g489 525 473 557 1552,g439 491 392 491 1539,r439 463 413 476 1558,r460 497 439 502 1555,g478 497 431 497 1552,g447 481 431 481 1558,g382 449 374 449 1552,r382 410 306 449 1531,r408 465 400 473 1552,g436 465 368 465 1550,g429 439 429 470 1558,r429 502 382 596 1524,r499 549 457 559 1550,r546 614 517 627 1547,g583 614 510 627 1547,r583 794 572 818 1479,g661 792 661 875 1492,r661 768 614 831 1503,r766 1071 740 1092 1375,r1071 1231 1040 1275 1440,r1228 1304 1194 1304 1385,r1302 1304 1247 1408 1427`
  .split(",").map(s => [s[0], ...s.slice(1).split(" ").map(Number)]);

// Momentum histogram: upper case is the strong shade, lower case the faded one
const histogram = `g34 g28 g22 G25 g17 G25 G34 G43 g43 g40 g28 g17 g12 g3 R-17 R-28 R-38 R-41 r-32 r-29 r-25 R-26 r-20 r-17 r-11 r-10 R-11 R-20 R-22 r-22 r-13 r-7 r-4 R-7 r-4 G4 g2 G4 G4 G8 G13 G13 g12 g7 g3 R-11 R-16 R-16 r-9 r-6 r-6 G13 G22 G28 g19 g16 G16 g4 R-6 R-17 R-20 R-20 R-29 r-29 r-26 r-24 r-22 r-17 r-14 R-17 R-17 R-17 r-11 r-10 r-5 G4 G7 g7 g7 g6 g3 R-2 R-4 R-8 R-14 R-16 R-17 R-19 R-22 R-25 r-20 r-19 r-18 r-12 r-10 R-8 R-11 R-11 R-11 r-7 r-2 G2 G2 G2 R-4 r-2 G4 G7 G7 G8 G11 G11 g7 g4 G4 G4 g2 g5 G8 G10 g8 g8 G12 G11 g8 g6 g4 g2 g1 R-4 R-8 R-11 R-14 R-17 R-18 R-20 r-12 r-8 r-5 R-7 r-3 r-1 G4 G7 G5 G11 G13 g12 g10 g6 g5 g5 G9 G10 g7 G8 G7 G8 G11 g9 g7 g6 g4 R-1 R-7 R-12 R-17 R-25 r-25 R-32 R-43 R-58 R-67 R-67`.split(" ");

const plot = add(document.getElementById("plot"), "g", { transform: "translate(-56 -163)" });
const line = (x1, y1, x2, y2, attrs) => add(plot, "line", { x1, y1, x2, y2, ...attrs });
const rect = (x, y, width, height, fill, attrs) => add(plot, "rect", { x, y, width, height, fill, stroke: "none", ...attrs });
const RIGHT = 2600;

rect(56, 749, RIGHT, 50, "#ecf3fe");
[205, 248, 292, 336, 380, 424, 468, 513, 557, 602, 636, 671, 707, 740, 771, 804, 839, 911]
  .forEach(y => rect(56, y, RIGHT, 1, "#eceef0"));
for (let i = 0; i < 9; i++) rect(Math.round(105.3 + i * 155.52), 163, 1, 767, "#eceef0");

candles.forEach(([c, top, bottom, high, low, vol], n) => {
  const green = c === "g", x = Math.round(barX(n));
  const y = barY(vol);
  rect(x - 3, y, 5, 798.5 - y, green ? "#4ba3a3" : "#e87772", { opacity: 0.6 });
  rect(x - 1, barY(high), 1, barY(low) - barY(high), green ? "#16877d" : "#c74b46");
  rect(x - 3, barY(top), 5, Math.max(1, barY(bottom) - barY(top)), green ? "#16877d" : "#e5534c");
});
const shade = { G: "#27988c", g: "#b3deda", R: "#f2654f", r: "#fbcfcc" };
line(56, 875.5, RIGHT, 875.5, { stroke: "#999", "stroke-dasharray": "5 4", "stroke-width": 1 });
histogram.forEach((s, n) => {
  const h = +s.slice(1) / 3, x = Math.round(barX(n));
  rect(x - 3, h > 0 ? 876 - h : 875, 6, Math.max(1, Math.abs(h)), shade[s[0]]);
});
const poly = (points, attrs) => add(plot, "polyline", { points, "stroke-linejoin": "round", ...attrs });
poly("56,838 73,837 80,835 87,836 96,827 105,818 118,813 131,817 138,818 145,821 151,829 163,841 169,843 196,847 222,847 229,848 241,856 248,857 255,854 269,853 286,852 312,850 322,845 333,843 343,847 355,853 364,856 384,854 391,847 404,839 416,840 423,838 433,844 443,851 451,854 463,861 475,863 500,865 518,869 535,869 545,866 553,863 573,861 588,863 612,873 640,882 649,884 671,881 694,885 705,883 734,883 765,878 818,877 831,874 849,872 857,870 881,870 896,872 912,877 935,884 964,883 990,880 1006,876 1037,874 1053,870 1074,870 1090,867 1113,867 1121,870 1139,879 1155,886 1163,897 1174,913 1181,919", { stroke: "#4a74c4" });
poly("56,850 71,844 92,839 105,833 124,824 143,821 153,823 177,834 204,841 229,844 249,850 282,852 310,851 339,847 355,849 384,852 402,848 426,843 443,845 475,855 518,865 535,866 571,863 600,864 622,869 640,874 656,878 697,882 750,881 797,878 849,875 881,871 901,872 943,878 975,881 1017,877 1058,873 1100,869 1124,869 1142,873 1155,879 1170,888 1181,897", { stroke: "#dd8a35" });

line(56, 494, 830, 166, { stroke: "#e5c5cf", "stroke-width": 2, "stroke-dasharray": "12 10" });
line(673, 799, 1382, 499, { stroke: "#3b6be0", "stroke-opacity": 0.4, "stroke-width": 2 });
line(56, 748.8, RIGHT, 748.8, { stroke: "#2f68bd", "stroke-width": 2 });
line(56, 699.5, RIGHT, 699.5, { stroke: "#777", "stroke-width": 1, "stroke-dasharray": "1 2" });
line(56, 550, RIGHT, 550, { stroke: "#000", "stroke-width": 2 });
poly("77,798 397,225 449,439 559,275 688,464 824,332 941,462 1090,316 1181,739", { stroke: "#000", "stroke-width": 2 });
const cross = { stroke: "#8b8e96", "stroke-width": 1, "stroke-dasharray": "5 5" };
line(56, 220.5, 535, 220.5, cross);
line(564, 220.5, 1364, 220.5, cross);
line(552.5, 163, 552.5, 207, cross);
line(552.5, 232, 552.5, 930, cross);
rect(56, 799, RIGHT, 1, "#e0e3eb");

const axis = add(document.getElementById("axis"), "g", { transform: "translate(-1382 -163)" });
const label = (y, text, x = 1391) => add(axis, "text", { x, y: y + 4 }, text);
[[204, "66,600.0"], [248, "66,400.0"], [292, "66,200.0"], [335, "66,000.0"], [379, "65,800.0"], [423, "65,600.0"], [468, "65,400.0"], [512, "65,200.0"], [558, "65,000.0"], [601, "64,800.0"], [635, "64,650.0"], [671, "64,490.0"], [739, "64,190.0"], [770, "64,050.0"], [804, "500.0"], [840, "250.0"], [875, "0.0"], [911, "−250.0"]]
  .forEach(([y, t]) => label(y, t));
const box = (x, y, width, height, fill) => add(axis, "rect", { x, y, width, height, fill, rx: 1, stroke: "none" });
box(1382, 792, 65, 7, "#fff");
box(1382, 799, 65, 1, "#e0e3eb");
const tag = (y, height, width, fill, text) => {
  box(1383, y, width, height, fill);
  label(y + 9, text).setAttribute("class", "tag");
};
tag(210, 20, 60, "#131722", "");
label(220, "66,530.3").setAttribute("class", "tag");
box(1361, 210, 21, 20, "#131722");
add(axis, "circle", { cx: 1371.5, cy: 220.5, r: 7.5, stroke: "#fff", "stroke-width": 1 });
add(axis, "path", { d: "M1371.5 217v7M1368 220.500h7", stroke: "#fff" });
tag(542, 17, 60, "#000", "65,031.5");
tag(691, 31, 60, "#f94a44", "64,367.5");
label(713, "01:26").setAttribute("class", "tag");
tag(738, 17, 31, "#f3644f", "361");
tag(872, 17, 49, "#ff7a05", "−150.1");
tag(889, 17, 49, "#f7654f", "−156.4");
tag(911, 17, 49, "#2962ff", "−306.5");

const time = add(document.getElementById("time"), "g", { transform: "translate(-56 0)" });
["27", "12:00", "28", "", "29", "12:00", "30", "12:00", "10月"]
  .forEach((t, i) => add(time, "text", { x: Math.round(105.3 + i * 155.52), y: 18 }, t));
add(time, "rect", { x: 480, y: 0, width: 145, height: 24, fill: "#131722", stroke: "none" });
add(time, "text", { x: 552, y: 19, style: "fill:#fff;font-weight:600;white-space:pre" }, "周六 2024-09-28   10:30");
add(time, "path", { d: "M1411 9h8l4 6-4 6h-8l-4-6z" });
add(time, "circle", { cx: 1415, cy: 15, r: 2 });

// symbol, coin colour, fixed digits, changing digits, tick direction, change, percent
const quotes = [
  ["BTCUSD", "#f0982e", "", "64,370.84", "up", "−1,229.17", "−1.87%"],
  ["BTCUSDT", "#f0982e", "64,37", "6.02", "up", "−1,225.99", "−1.87%"],
  ["BTCUSDT", "#f0982e", "64,37", "4.9", "up", "−1,228.6", "−1.87%"],
  ["ETHUSDT", "#e3ebf8", "2,620.", "70", "down", "−36.91", "−1.39%"],
  ["ETHUSDT", "#e3ebf8", "2,620.", "98", "up", "−36.64", "−1.38%"],
  ["ORDIUSDT", "#16181c", "38.9", "7", "up", "−0.82", "−2.06%"],
  ["TIAUSDT", "#7547d6", "5.86", "9", "up", "−0.139", "−2.31%"],
  ["TRBUSDT", "#101820", "72.2", "2", "down", "−2.38", "−3.19%"],
  ["PEPEUSDT", "#44873f", "0.0000109", "9", "up", "−0.00000029", "−2.57%"],
  ["PENDLEUSDT", "#e9eef8", "4.24", "0", "down", "−0.106", "−2.44%"],
  ["WIFUSDT", "#ad9069", "2.44", "1", "up", "−0.012", "−0.49%"],
  ["BIGTIMEUSDT", "#d9dcdf", "0.146", "37", "up", "0.00083", "0.57%"],
  ["AVAXUSDT", "#db5248", "28.4", "1", "up", "−0.63", "−2.17%"],
  ["CELUSDT", "#7d3fa4", "0.33", "42", "down", "−0.0055", "−1.62%"],
  ["BCHUSDT", "#4da885", "344.", "7", "up", "−7.9", "−2.24%"],
  ["TURBOUSDT", "#3a5ba8", "0.00591", "434", "up", "−0.00017064", "−2.81%"],
];
const glyphs = {
  BTC: '<use href="#btc"/>',
  ETH: '<path fill="#7b92d4" stroke="none" d="M7 8l2.500 5L7 18l-2.500-5z"/>',
  ORD: '<rect x="5" y="11" width="4" height="4" stroke="#fff"/>',
  TIA: '<path stroke="#d9c8ff" d="M4.500 14c2-5 5-3 5 0-1 3-4 1-3-1"/>',
  TRB: '<path stroke="#2fe0a0" stroke-width="2" d="M4 12h5l-3 4"/>',
  PEP: '<path stroke="#1f4d24" d="M6 12h4M5 15h4"/>',
  PEN: '<path stroke="#22355c" stroke-width="2" d="M7 9v7M5 15h4"/>',
  WIF: '<path stroke="#5c4223" stroke-width="2" d="M5 13h4M6 15h3"/>',
  BIG: '<circle cx="7" cy="13" r="3" stroke="#9ea2a8"/>',
  AVA: '<path fill="#fff" stroke="none" d="M7 9l3 7H8l-1-3-1 3H4z"/>',
  CEL: '<path stroke="#fff" d="M9 11a3 3 0 1 0 0 4"/>',
};
glyphs.BCH = glyphs.BTC;
const editIcon = '<svg class="edit"><use href="#edit"/></svg>';
document.getElementById("rows").innerHTML = quotes.map(([sym, coin, fixed, moving, dir, chg, pct], i) => {
  const tone = chg[0] === "−" ? "" : ' class="up"';
  const mark = glyphs[sym.slice(0, 3)] || "";
  const icon = i === 0
    ? `<svg class="i20" viewBox="0 0 20 20"><circle cx="10" cy="10" r="7.500" fill="${coin}" stroke="none"/><g transform="translate(3 -3)"><path stroke="#fff" d="M5.500 10v6M5.500 10h2.500a1.500 1.500 0 0 1 0 3H5.500h3a1.500 1.500 0 0 1 0 3h-3"/></g></svg>`
    : `<svg class="i20" viewBox="0 0 20 20" style="--coin:${coin}"><use href="#coins"/>${mark}</svg>`;
  return `<tr${i === 2 ? ' class="selected"' : ""}><td>${sym === "BCHUSDT" ? '<i class="flag"></i>' : ""}<div class="sym">${icon}<span>${sym}</span>${i < 3 ? editIcon : ""}</div></td><td>${fixed}<span class="${dir}">${moving}</span></td><td${tone}>${chg}</td><td${tone}>${pct}</td></tr>`;
}).join("");
document.getElementById("list").scrollTop = 13;
```
